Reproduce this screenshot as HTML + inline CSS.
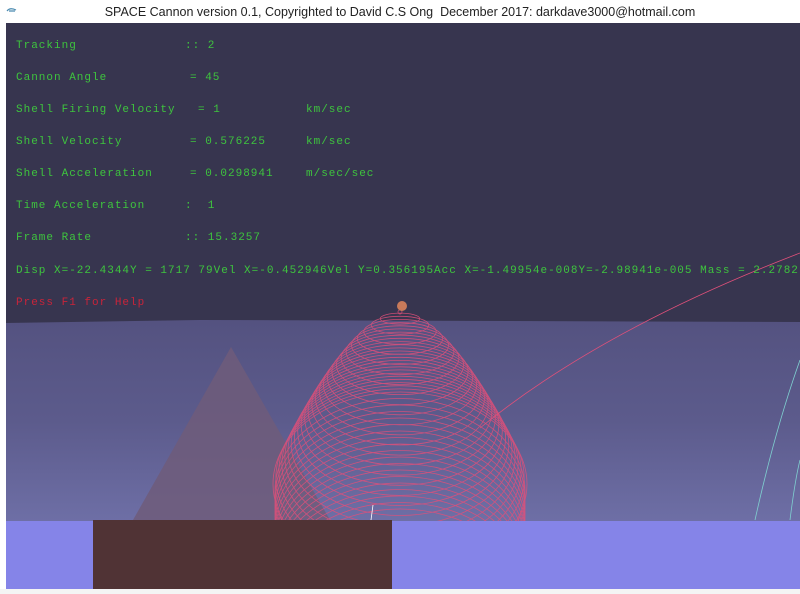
<!DOCTYPE html>
<html><head><style>
html,body{margin:0;width:800px;height:594px;overflow:hidden}
body{background:#fff;position:relative;font-family:"Liberation Sans",sans-serif}
.t{position:absolute;top:0;left:0;width:800px;height:23px;background:#fff;font-size:12.5px;color:#222;text-align:center;line-height:24px}
.g{position:absolute;font-family:"Liberation Mono",monospace;font-size:11px;letter-spacing:1px;color:#3ec43e;white-space:pre;line-height:12px}
</style></head><body>
<div class="t">SPACE Cannon version 0.1, Copyrighted to David C.S Ong &nbsp;December 2017: darkdave3000@hotmail.com</div>
<svg style="position:absolute;left:6px;top:6px" width="12" height="8"><path d="M1 5 Q4 1 10 4 M3 5 L9 5" stroke="#4a8ab0" fill="none" stroke-width="1.2"/></svg>
<svg style="position:absolute;left:0;top:23px;overflow:hidden;display:block" width="800" height="571" viewBox="0 23 800 571">
<defs><linearGradient id="sky" x1="0" y1="0" x2="0" y2="1"><stop offset="0" stop-color="#545280"/><stop offset="0.5" stop-color="#5c5b8c"/><stop offset="1" stop-color="#6e6fa6"/></linearGradient></defs>
<rect x="6" y="23" width="794" height="300" fill="#37354f"/>
<path d="M6 323 L200 320 L800 322 L800 522 L6 522 Z" fill="url(#sky)"/>
<polygon points="231,347 133,520 330,520" fill="#6f5c7a" opacity="0.85"/>
<g fill="none" stroke="#e0507a" stroke-width="0.8" opacity="0.85" id="c"></g>
<path d="M480 428 Q600 330 800 253" stroke="#e0507a" stroke-width="0.8" fill="none"/>
<path d="M755 520 Q775 430 800 360" stroke="#7fd0d0" stroke-width="0.8" fill="none"/>
<path d="M790 520 Q795 480 800 460" stroke="#7fd0d0" stroke-width="0.8" fill="none"/>
<path d="M373 505 L371 520" stroke="#fff" stroke-width="0.8"/>
<circle cx="402" cy="306" r="5" fill="#c87a5a"/>
<rect x="6" y="521" width="794" height="68" fill="#8584e8"/>
<rect x="93" y="520" width="299" height="69" fill="#503335"/>
<rect x="0" y="589" width="800" height="5" fill="#f4f4f4"/>
</svg>
<div class="g" style="left:16px;top:40px">Tracking</div><div class="g" style="left:185px;top:40px">:: 2</div>
<div class="g" style="left:16px;top:72px">Cannon Angle</div><div class="g" style="left:190px;top:72px">= 45</div>
<div class="g" style="left:16px;top:104px">Shell Firing Velocity</div><div class="g" style="left:198px;top:104px">= 1</div><div class="g" style="left:306px;top:104px">km/sec</div>
<div class="g" style="left:16px;top:136px">Shell Velocity</div><div class="g" style="left:190px;top:136px">= 0.576225</div><div class="g" style="left:306px;top:136px">km/sec</div>
<div class="g" style="left:16px;top:168px">Shell Acceleration</div><div class="g" style="left:190px;top:168px">= 0.0298941</div><div class="g" style="left:306px;top:168px">m/sec/sec</div>
<div class="g" style="left:16px;top:200px">Time Acceleration</div><div class="g" style="left:185px;top:200px">:  1</div>
<div class="g" style="left:16px;top:232px">Frame Rate</div><div class="g" style="left:185px;top:232px">:: 15.3257</div>
<div class="g" style="left:16px;top:265px">Disp X=-22.4344Y = 1717 79Vel X=-0.452946Vel Y=0.356195Acc X=-1.49954e-008Y=-2.98941e-005 Mass = 2.2782</div>
<div class="g" style="left:16px;top:297px;color:#c8243a">Press F1 for Help</div>
<script>
var g=document.getElementById('c'),s='';
for(var i=0;i<=26;i++){var k=i/26;var t=310+82*k,rx=125*Math.pow(k,0.6)+2,ry=90*k+2;s+='<ellipse cx="400" cy="'+(t+ry).toFixed(1)+'" rx="'+rx.toFixed(1)+'" ry="'+ry.toFixed(1)+'"/>';}
for(var i=1;i<=18;i++){var t=392+i*6.5;s+='<ellipse cx="400" cy="'+(t+92).toFixed(1)+'" rx="125" ry="92"/>';}
g.innerHTML=s;
</script>
</body></html>
